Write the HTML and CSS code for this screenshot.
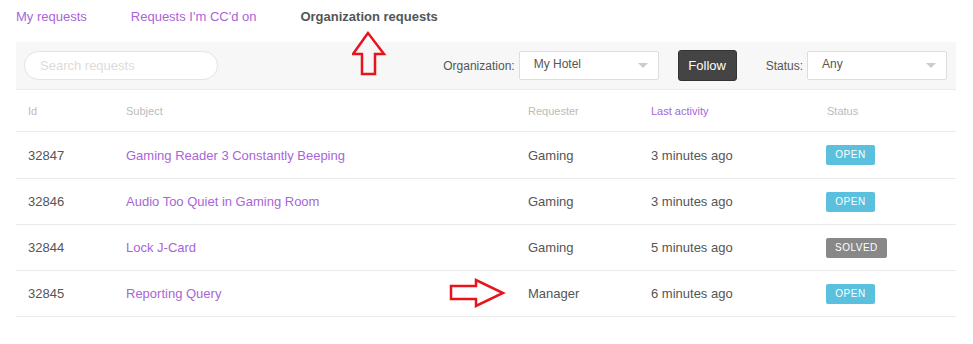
FILE: index.html
```html
<!DOCTYPE html>
<html lang="en">
<head>
    <meta charset="UTF-8">
    <title>Organization requests</title>
    <link rel="stylesheet" href="styles.css">
</head>
<body>
    <div class="page">
        <nav class="tabs">
            <a href="#" class="tab">My requests</a>
            <a href="#" class="tab">Requests I'm CC'd on</a>
            <a href="#" class="tab active">Organization requests</a>
        </nav>

        <div class="filters">
            <input type="text" class="search" placeholder="Search requests">
            <div class="filter-right">
                <label class="filter-label">Organization:</label>
                <div class="select"><span>My Hotel</span><i class="caret"></i></div>
                <button class="follow">Follow</button>
                <label class="filter-label status-label">Status:</label>
                <div class="select"><span>Any</span><i class="caret"></i></div>
            </div>
        </div>

        <table class="requests">
            <thead>
                <tr>
                    <th class="col-id">Id</th>
                    <th class="col-subject">Subject</th>
                    <th class="col-requester">Requester</th>
                    <th class="col-activity sorted">Last activity</th>
                    <th class="col-status">Status</th>
                </tr>
            </thead>
            <tbody>
                <tr class="first">
                    <td>32847</td>
                    <td><a href="#">Gaming Reader 3 Constantly Beeping</a></td>
                    <td>Gaming</td>
                    <td>3 minutes ago</td>
                    <td><span class="badge open">Open</span></td>
                </tr>
                <tr>
                    <td>32846</td>
                    <td><a href="#">Audio Too Quiet in Gaming Room</a></td>
                    <td>Gaming</td>
                    <td>3 minutes ago</td>
                    <td><span class="badge open">Open</span></td>
                </tr>
                <tr>
                    <td>32844</td>
                    <td><a href="#">Lock J-Card</a></td>
                    <td>Gaming</td>
                    <td>5 minutes ago</td>
                    <td><span class="badge solved">Solved</span></td>
                </tr>
                <tr>
                    <td>32845</td>
                    <td><a href="#">Reporting Query</a></td>
                    <td>Manager</td>
                    <td>6 minutes ago</td>
                    <td><span class="badge open">Open</span></td>
                </tr>
            </tbody>
        </table>
    </div>

    <svg class="arrow arrow-up" width="36" height="48" viewBox="0 0 36 48">
        <polygon points="16,3 1,24 10,24 10,44 23,44 23,24 32,24" fill="none" stroke="#e8141c" stroke-width="2.5"/>
    </svg>
    <svg class="arrow arrow-right" width="58" height="32" viewBox="0 0 58 32">
        <polygon points="2,8 27,8 27,2 54,15 27,28 27,21 2,21" fill="none" stroke="#e8141c" stroke-width="2.5"/>
    </svg>
</body>
</html>
```

FILE: styles.css
```css
body {
    font-family: "Liberation Sans", Arial, sans-serif;
    margin: 0;
    padding: 0;
    background-color: #fff;
    color: #555;
}
.page {
    padding: 0 17px 0 16px;
}
.tabs {
    display: flex;
    gap: 44px;
    height: 42px;
    padding-top: 9px;
    box-sizing: border-box;
}
.tab {
    font-size: 13px;
    line-height: 16px;
    color: #a865d8;
    text-decoration: none;
}
.tab.active {
    color: #555;
    font-weight: bold;
}
.filters {
    display: flex;
    justify-content: space-between;
    align-items: center;
    background-color: #f7f7f7;
    border-bottom: 1px solid #ececec;
    height: 48px;
    padding: 0 9px 0 8px;
    box-sizing: border-box;
}
.search {
    width: 194px;
    height: 29px;
    box-sizing: border-box;
    border: 1px solid #e3e3e3;
    border-radius: 15px;
    background-color: #fff;
    padding: 0 15px;
    font-family: inherit;
    font-size: 13px;
    outline: none;
}
.search::placeholder {
    color: #dcdcdc;
}
.filter-right {
    display: flex;
    align-items: center;
}
.filter-label {
    font-size: 12px;
    color: #555;
    margin-right: 4px;
}
.status-label {
    margin-left: 29px;
}
.select {
    display: flex;
    justify-content: space-between;
    align-items: center;
    width: 140px;
    height: 29px;
    box-sizing: border-box;
    border: 1px solid #ddd;
    border-radius: 2px;
    background-color: #fff;
    padding: 0 10px 0 14px;
    font-size: 12px;
    color: #555;
}
.select span {
    margin-top: -3px;
}
.caret {
    width: 0;
    height: 0;
    border-left: 5px solid transparent;
    border-right: 5px solid transparent;
    border-top: 5px solid #ccc;
}
.follow {
    margin-left: 19px;
    width: 59px;
    height: 31px;
    background-color: #444;
    color: #fff;
    border: 1px solid #333;
    border-radius: 3px;
    font-family: inherit;
    font-size: 13px;
    cursor: pointer;
}
.requests {
    width: 100%;
    border-collapse: collapse;
}
.requests th {
    text-align: left;
    font-weight: normal;
    font-size: 11px;
    color: #bbb;
    height: 41px;
    padding: 0 0 0 12px;
    border-bottom: 1px solid #eaeaea;
}
.requests th.sorted {
    color: #a865d8;
}
.requests td {
    font-size: 13px;
    color: #555;
    height: 45px;
    padding: 0 0 0 12px;
    border-bottom: 1px solid #eaeaea;
}
.requests tr.first td {
    height: 46px;
}
.requests td a {
    color: #a865d8;
    text-decoration: none;
}
.col-id {
    width: 86px;
}
.col-subject {
    width: 390px;
}
.col-requester {
    width: 111px;
}
.col-activity {
    width: 164px;
}
.badge {
    display: inline-block;
    font-size: 10px;
    text-transform: uppercase;
    letter-spacing: 0.5px;
    color: #fff;
    padding: 0 9px;
    line-height: 20px;
    border-radius: 2px;
    margin-left: -1px;
}
.badge.open {
    background-color: #5bc0de;
    width: 31px;
    text-align: center;
}
.badge.solved {
    background-color: #888;
}
.arrow {
    position: absolute;
}
.arrow-up {
    left: 352px;
    top: 30px;
}
.arrow-right {
    left: 449px;
    top: 278px;
}
```
